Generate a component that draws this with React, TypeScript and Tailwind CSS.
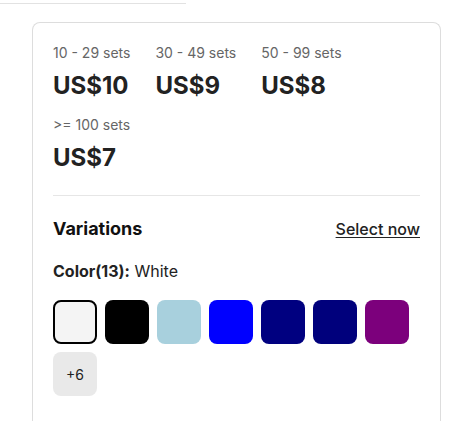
import { useState } from 'react';

const tiers = [
  { range: '10 - 29 sets', price: 'US$10' },
  { range: '30 - 49 sets', price: 'US$9' },
  { range: '50 - 99 sets', price: 'US$8' },
  { range: '>= 100 sets', price: 'US$7' },
];

const colors = [
  { name: 'White', bg: 'bg-[#f4f4f4]' },
  { name: 'Black', bg: 'bg-[#000000]' },
  { name: 'Light Blue', bg: 'bg-[#a8d0dd]' },
  { name: 'Blue', bg: 'bg-[#0000ff]' },
  { name: 'Navy', bg: 'bg-[#000080]' },
  { name: 'Dark Navy', bg: 'bg-[#00007c]' },
  { name: 'Purple', bg: 'bg-[#7c007c]' },
];

function App() {
  const [selected, setSelected] = useState(0);

  return (
    <div className="min-h-screen bg-white font-['Inter','Liberation_Sans',sans-serif] text-[#222]">
      {/* top rule */}
      <div className="h-[4px] w-[186px] border-b border-[#e2e2e2]" />

      <div className="pl-[32px] pr-[18px] pt-[18px]">
        <div className="rounded-t-[8px] border border-b-0 border-[#dddddd] px-[20px] pt-[20px] pb-[40px]">
          {/* Price tiers */}
          <div className="flex flex-wrap gap-x-[25px] gap-y-[13px] border-b border-[#e6e6e6] pb-[21px]">
            {tiers.map((t) => (
              <div key={t.range} className="flex flex-col">
                <span className="text-[14px] leading-[20px] text-[#666]">{t.range}</span>
                <span className="mt-[7px] text-[24px] leading-[32px] font-bold text-[#222]">{t.price}</span>
              </div>
            ))}
          </div>

          {/* Variations */}
          <div className="mt-[21px] flex items-center justify-between">
            <span className="text-[18px] leading-[24px] font-bold text-[#111]">Variations</span>
            <a href="#" className="text-[16px] leading-[22px] font-medium text-[#222] underline underline-offset-[2px]">
              Select now
            </a>
          </div>

          <div className="mt-[20px] text-[16px] leading-[20px] text-[#222]">
            <span className="font-bold">Color(13):</span> {colors[selected].name}
          </div>

          <div className="mt-[19px] flex flex-wrap gap-[8px]">
            {colors.map((c, i) => (
              <button
                key={c.name}
                onClick={() => setSelected(i)}
                className={`h-[44px] w-[44px] rounded-[8px] ${c.bg} ${i === selected ? 'border-2 border-black' : ''}`}
              />
            ))}
            <button className="flex h-[44px] w-[44px] items-center justify-center rounded-[8px] bg-[#e9e9e9] text-[14px] text-[#222]">
              +6
            </button>
          </div>
        </div>
      </div>
    </div>
  );
}

export default App;
